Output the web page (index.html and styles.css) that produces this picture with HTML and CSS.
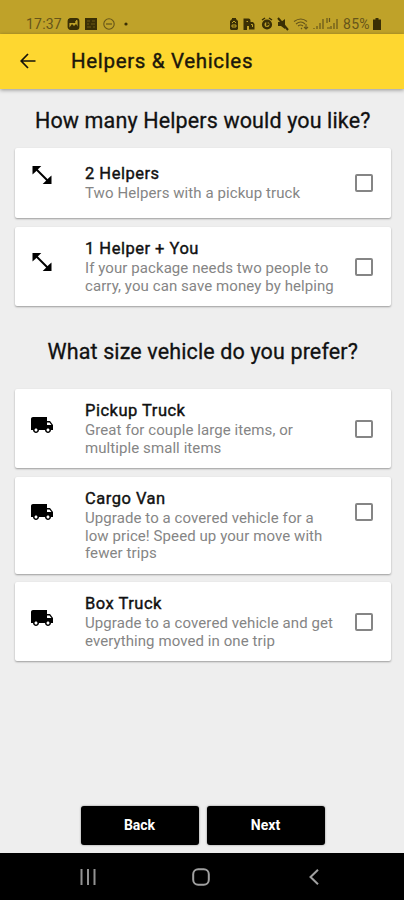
FILE: index.html
```html
<!DOCTYPE html>
<html lang="en">
<head>
<meta charset="utf-8">
<title>Helpers &amp; Vehicles</title>
<link rel="stylesheet" href="styles.css">
</head>
<body>
<svg width="0" height="0" class="defs">
  <symbol id="arrows" viewBox="0 0 20 20"><path d="M4 4L16 16" stroke="#000" stroke-width="2" fill="none"/><path d="M.5 1H9.300L6.500 3.800L3.600 6.700L.5 9.600ZM19.500 19H10.700L13.500 16.200L16.400 13.300L19.500 10.400Z"/></symbol>
  <symbol id="truck" viewBox="1 4 22 16"><path d="M20 8h-3V4H3c-1.100 0-2 .9-2 2v11h2c0 1.660 1.340 3 3 3s3-1.340 3-3h6c0 1.660 1.340 3 3 3s3-1.340 3-3h2v-5l-3-4zM6 18.500c-.83 0-1.500-.67-1.500-1.500s.67-1.500 1.500-1.500 1.500.67 1.500 1.500-.67 1.500-1.500 1.500zm13.500-9l1.960 2.500H17V9.500h2.500zm-1.500 9c-.83 0-1.500-.67-1.500-1.500s.67-1.500 1.500-1.500 1.500.67 1.500 1.500-.67 1.500-1.500 1.500z"/></symbol>
</svg>
<div class="screen">
  <div class="status">
    <span class="clock">17:37</span>
    <svg class="status-left" width="62" height="14" viewBox="0 0 62 14">
      <rect x="1.500" y="2" width="10" height="10" rx="2" fill="none" stroke="#3a2f05" stroke-width="1.800"/><path d="M1 2h8v4H1zM2 11l3-4 2 2 2-2 3 4z" fill="#3a2f05"/><circle cx="9" cy="5" r="1" fill="#bfa229"/>
      <rect x="18" y="1" width="12" height="12" fill="#3a2f05"/><path d="M20 4h3M25 4h3M20 7h2M24 7h4M20 10h4M26 10h2" stroke="#6d5a14"/>
      <circle cx="42" cy="7" r="5.200" fill="none" stroke="#66551a" stroke-width="1.100"/><path d="M39 7h6" stroke="#66551a" stroke-width="1.200"/>
      <circle cx="59" cy="7" r="1.600" fill="#3a2f05"/>
    </svg>
    <svg class="status-right" width="112" height="14" viewBox="0 0 112 14">
      <path d="M4 1h4v1l2 2v8l-1 1H3l-1-1V4l2-2z" fill="#3a2f05"/><path d="M4 6l2-2 2 2M4 8h4v2H4z" fill="none" stroke="#bfa229"/>
      <path d="M15.500 1.500h5q2 0 2 2V5H25l1.500 2v5.500H21V9h-2v4h-3.500z" fill="#3a2f05"/><path d="M18.500 4.500h1.500M23 7.500h1.500v2.500" stroke="#bfa229" fill="none"/>
      <circle cx="39" cy="7.500" r="3.800" fill="none" stroke="#3a2f05" stroke-width="2.600"/><path d="M34 3l3-2M41 1l3 2M39 5v3l2-1" stroke="#3a2f05" stroke-width="1.500" fill="none"/>
      <path d="M50 5h3l4-3v10l-4-3h-3z" fill="#3a2f05"/><path d="M50 1l10 12" stroke="#3a2f05" stroke-width="2"/>
      <g fill="none" stroke="#66551a" stroke-width="1.100"><path d="M66 4.500q7-5 13 0M68 7q5-4 9 0M70 9q2.500-2 5 0"/><path d="M73 11l1 1M78 7v5M76 10l2 2 2-2"/></g>
      <g stroke="#66551a" stroke-width="1.200"><path d="M86 12v-1M89 12V9M92 12V6M95 12V2" /><path d="M103 12V9M106 12V6M109 12V2"/><path d="M99 1v5M101.500 1v4M99 11h3"/></g>
    </svg>
    <span class="battery">85%</span>
    <svg class="cell" width="8" height="12" viewBox="0 0 8 12"><path d="M2.500 0h3v1.500H8V12H0V1.500h2.500z" fill="#3a2f05"/></svg>
  </div>
  <header class="appbar">
    <svg width="16" height="16" viewBox="0 0 16 16"><path d="M15.500 8H1.500M8 1L1.200 8L8 15" fill="none" stroke="#16130a" stroke-width="1.700"/></svg>
    <h1>Helpers &amp; Vehicles</h1>
  </header>
  <main>
    <h2 class="helpers-heading">How many Helpers would you like?</h2>
    <section class="cards">
      <article class="card single">
        <svg class="arrows"><use href="#arrows"/></svg>
        <div class="copy"><h3>2 Helpers</h3><p>Two Helpers with a pickup truck</p></div>
        <span class="check"></span>
      </article>
      <article class="card">
        <svg class="arrows"><use href="#arrows"/></svg>
        <div class="copy"><h3>1 Helper + You</h3><p>If your package needs two people to<br>carry, you can save money by helping</p></div>
        <span class="check"></span>
      </article>
    </section>
    <h2 class="vehicle-heading">What size vehicle do you prefer?</h2>
    <section class="cards">
      <article class="card">
        <svg class="truck"><use href="#truck"/></svg>
        <div class="copy"><h3>Pickup Truck</h3><p>Great for couple large items, or<br>multiple small items</p></div>
        <span class="check"></span>
      </article>
      <article class="card triple">
        <svg class="truck"><use href="#truck"/></svg>
        <div class="copy"><h3>Cargo Van</h3><p>Upgrade to a covered vehicle for a<br>low price! Speed up your move with<br>fewer trips</p></div>
        <span class="check"></span>
      </article>
      <article class="card last">
        <svg class="truck"><use href="#truck"/></svg>
        <div class="copy"><h3>Box Truck</h3><p>Upgrade to a covered vehicle and get<br>everything moved in one trip</p></div>
        <span class="check"></span>
      </article>
    </section>
  </main>
  <div class="actions"><button>Back</button><button>Next</button></div>
  <nav>
    <svg width="16" height="16" viewBox="0 0 16 16"><path d="M1.500 0v16M8 0v16M14.500 0v16" stroke="#929292" stroke-width="2"/></svg>
    <svg class="home" width="18" height="18" viewBox="0 0 18 18"><rect x="1.200" y="1.200" width="15.600" height="15.600" rx="5" fill="none" stroke="#a0a0a0" stroke-width="2"/></svg>
    <svg width="10" height="16" viewBox="0 0 10 16"><path d="M9 .8L1.500 8L9 15.200" fill="none" stroke="#a0a0a0" stroke-width="2"/></svg>
  </nav>
</div>
</body>
</html>
```
FILE: styles.css
```css
* { box-sizing: border-box; }
body { margin: 0; font-family: Roboto, sans-serif; }
h1, h2, h3, p { margin: 0; white-space: nowrap; }
.defs { position: absolute; }
.screen { width: 404px; height: 900px; display: flex; flex-direction: column; background: #eee; overflow: hidden; }
.status { height: 34px; flex: none; background: #bfa229; display: flex; align-items: center; padding: 13px 23px 0 26px; color: #66551a; font-size: 14px; }
.clock { width: 41px; letter-spacing: .2px; }
.status-right { margin-left: auto; }
.battery { width: 28px; margin-left: 3px; letter-spacing: .3px; }
.cell { margin-left: 2px; }
.appbar { height: 55px; flex: none; background: #fed730; display: flex; align-items: center; gap: 35px; padding: 0 0 1px 20px; box-shadow: 0 1px 4px rgba(0,0,0,.4); }
h1 { font-size: 20.500px; line-height: 24px; font-weight: 400; letter-spacing: .66px; color: #1c180b; -webkit-text-stroke: .4px #1c180b; }
main { flex: 1; padding: 0 13px 0 14.500px; }
h2 { font-size: 21.500px; line-height: 26px; font-weight: 400; text-align: center; color: #111; -webkit-text-stroke: .3px #111; letter-spacing: .13px; }
.helpers-heading { margin: 18.500px 0 14.500px; }
.vehicle-heading { margin: 33px 0 24px; }
.cards { display: flex; flex-direction: column; gap: 9px; }
.card { height: 79px; background: #fff; border-radius: 2px; box-shadow: 0 1px 2px rgba(0,0,0,.35); display: flex; align-items: center; padding-right: 18.500px; }
.card.single { height: 70px; }
.card.triple { height: 97px; }
.card.last { margin-top: -1px; }
.arrows { width: 20px; height: 20px; margin: 0 33.500px 9px 17px; flex: none; }
.single .arrows { margin-bottom: 16px; }
.truck { width: 22px; height: 16px; margin: 0 32.500px 8px 16px; flex: none; }
.triple .truck, .triple .check { margin-bottom: 27px; }
.copy { flex: 1; align-self: flex-start; padding-top: 12px; }
.single .copy { padding-top: 16px; }
h3 { font-size: 16.500px; line-height: 20px; font-weight: 400; letter-spacing: .5px; color: #111; -webkit-text-stroke: .4px #111; }
p { margin-top: 1px; font-size: 15px; line-height: 17.500px; letter-spacing: .08px; color: #858585; }
.check { width: 18px; height: 18px; border: 2px solid #858585; border-radius: 2px; flex: none; }
.actions { height: 47.500px; flex: none; display: flex; justify-content: center; gap: 8px; padding-left: 1px; }
button { width: 118px; height: 39px; margin: 0; padding: 0; border: 0; border-radius: 3px; background: #000; color: #fff; font: 700 14px Roboto, sans-serif; box-shadow: 0 0 2px rgba(0,0,0,.5); }
nav { height: 47px; flex: none; background: #000; display: flex; align-items: center; justify-content: space-between; padding: 0 85px 0 80px; }
.home { margin-right: 3px; }
```
